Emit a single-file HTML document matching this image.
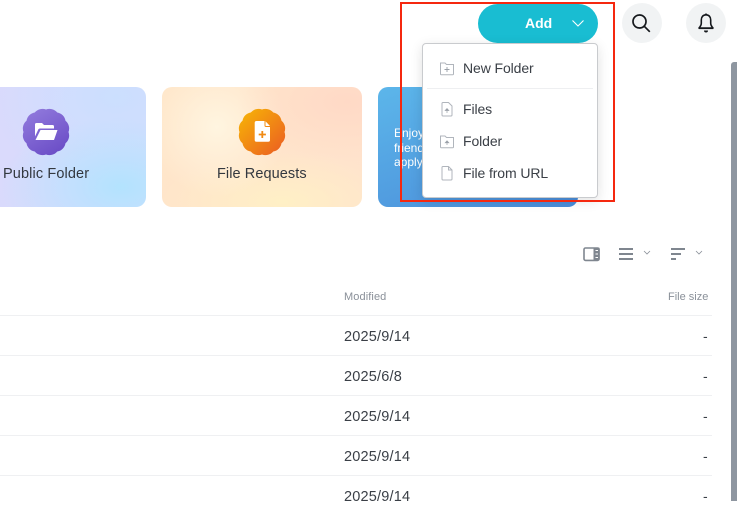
<!DOCTYPE html>
<html><head><meta charset="utf-8">
<style>
html,body{margin:0;padding:0;background:#fff}
body{width:737px;height:501px;position:relative;overflow:hidden;font-family:"Liberation Sans",sans-serif;color:#33383f}
.a{position:absolute}
.t{position:absolute;white-space:nowrap;line-height:20px}
.card{position:absolute;top:87px;height:120px;border-radius:10px;overflow:hidden}
.line{position:absolute;left:0;width:712px;height:1px;background:#eff0f2}
.date{position:absolute;left:344px;font-size:14.500px;line-height:20px;color:#3a3f46;letter-spacing:.2px}
.dash{position:absolute;left:703px;font-size:14px;line-height:20px;color:#3a3f46}
.mi{position:absolute;left:463px;font-size:14px;line-height:20px;color:#3a3f46;white-space:nowrap;letter-spacing:-.1px}
</style></head><body>

<div class="card" style="left:-54px;width:200px;background:radial-gradient(120px 70px at 175px 100px,#b3e3fe 0%,rgba(179,227,254,0) 100%),radial-gradient(130px 90px at 170px 10px,#cbdffe 0%,rgba(203,223,254,0) 100%),linear-gradient(120deg,#dcd9fc,#d6dcfd)"></div>
<svg class="a" style="left:22px;top:108px" width="48" height="48" viewBox="0 0 48 48">
<defs><linearGradient id="g1" x1="0.2" y1="0" x2="0.8" y2="1"><stop offset="0" stop-color="#9079dc"/><stop offset="1" stop-color="#6a4cc6"/></linearGradient>
<linearGradient id="g2" x1="0.1" y1="0.1" x2="0.9" y2="0.9"><stop offset="0" stop-color="#f6ae08"/><stop offset="1" stop-color="#ec6420"/></linearGradient></defs>
<path fill="url(#g1)" d="M46.500 24A10 10 0 0 1 43.490 35.250A10 10 0 0 1 35.250 43.490A10 10 0 0 1 24 46.500A10 10 0 0 1 12.750 43.490A10 10 0 0 1 4.510 35.250A10 10 0 0 1 1.500 24A10 10 0 0 1 4.510 12.750A10 10 0 0 1 12.750 4.510A10 10 0 0 1 24 1.500A10 10 0 0 1 35.250 4.510A10 10 0 0 1 43.490 12.750A10 10 0 0 1 46.500 24Z"/>
<path fill="#fff" d="M14.500 15h5.500l2 2h8.500a1.500 1.500 0 0 1 1.500 1.500V20.500H18a2 2 0 0 0-1.900 1.400L13 28.500V16.500a1.500 1.500 0 0 1 1.500-1.500zM18.500 22H35.500L32 32H13.500z"/>
</svg>
<div class="t" style="left:3px;top:164px;font-size:14.500px;letter-spacing:.12px">Public Folder</div>

<div class="card" style="left:162px;width:200px;background:radial-gradient(110px 60px at 185px 15px,#ffd9c6 0%,rgba(255,217,198,0) 100%),radial-gradient(70px 70px at 55px 40px,#fff5e0 0%,rgba(255,245,224,0) 100%),radial-gradient(120px 50px at 120px 115px,#fff0c6 0%,rgba(255,240,198,0) 100%),linear-gradient(120deg,#ffe6c9,#ffe3cd)"></div>
<svg class="a" style="left:238px;top:108px" width="48" height="48" viewBox="0 0 48 48">
<path fill="url(#g2)" d="M46.500 24A10 10 0 0 1 43.490 35.250A10 10 0 0 1 35.250 43.490A10 10 0 0 1 24 46.500A10 10 0 0 1 12.750 43.490A10 10 0 0 1 4.510 35.250A10 10 0 0 1 1.500 24A10 10 0 0 1 4.510 12.750A10 10 0 0 1 12.750 4.510A10 10 0 0 1 24 1.500A10 10 0 0 1 35.250 4.510A10 10 0 0 1 43.490 12.750A10 10 0 0 1 46.500 24Z"/>
<path fill="#fff" d="M18.500 13H26.500V17.500a1.500 1.500 0 0 0 1.500 1.500h4V32a1.800 1.800 0 0 1-1.800 1.800H18.500a1.800 1.800 0 0 1-1.800-1.800V14.800a1.800 1.800 0 0 1 1.800-1.800zM27.500 13.200L32 18H28a.5.500 0 0 1-.5-.5z"/>
<path fill="#f08a14" d="M23.400 23h1.800v2.600h2.700v1.800h-2.700V30h-1.800v-2.600h-2.700v-1.800h2.700z"/>
</svg>
<div class="t" style="left:217px;top:164px;font-size:14.500px;letter-spacing:.08px">File Requests</div>

<div class="card" style="left:378px;width:200px;background:linear-gradient(160deg,#5cb6ea,#4a8cd9)"></div>
<div class="t" style="left:394px;top:126px;font-size:12px;color:#fff;line-height:14.500px;white-space:normal;width:28px;overflow:hidden">Enjoy<br>friend<br>apply</div>

<div class="a" style="left:478px;top:4px;width:120px;height:39px;border-radius:20px;background:#19bdd2"></div>
<div class="t" style="left:525px;top:13px;font-size:14px;font-weight:bold;color:#fff">Add</div>
<svg class="a" style="left:571px;top:18px" width="14" height="10" viewBox="0 0 14 10"><path d="M1.500 2.500l5.500 5.500L12.500 2.500" fill="none" stroke="#fff" stroke-width="1.100"/></svg>

<div class="a" style="left:622px;top:3px;width:40px;height:40px;border-radius:50%;background:#f1f3f4"></div>
<svg class="a" style="left:630px;top:12px" width="24" height="24" viewBox="0 0 24 24"><circle cx="9.500" cy="9.500" r="6.500" fill="none" stroke="#15181c" stroke-width="1.700"/><path d="M14.300 14.300l5.500 5.500" stroke="#15181c" stroke-width="1.700"/></svg>
<div class="a" style="left:686px;top:3px;width:40px;height:40px;border-radius:50%;background:#f1f3f4"></div>
<svg class="a" style="left:694px;top:11px" width="24" height="24" viewBox="0 0 24 24"><path d="M12 3.800c-3.200 0-4.700 2.500-4.700 5.200v3.200c0 2-1 3.300-2.300 4.800h14c-1.300-1.500-2.300-2.800-2.300-4.800V9c0-2.700-1.500-5.200-4.700-5.200z" fill="none" stroke="#15181c" stroke-width="1.600" stroke-linejoin="round"/><path d="M4.800 17.300h14.400" stroke="#15181c" stroke-width="1.600"/><path d="M10 19.500h4a2 2 0 0 1-4 0z" fill="#15181c"/><path d="M11 3.500h2" stroke="#15181c" stroke-width="1.800"/></svg>

<div class="a" style="left:731px;top:62px;width:6px;height:439px;background:#8e96a0;border-radius:3px 0 0 0"></div>

<div class="a" style="left:422px;top:43px;width:174px;height:153px;background:#fff;border:1px solid #c9cbce;border-radius:4px;box-sizing:content-box;box-shadow:0 3px 12px rgba(0,0,0,.12)"></div>
<div class="a" style="left:427px;top:88px;width:166px;height:1px;background:#eeeff1"></div>
<svg class="a" style="left:439px;top:60px" width="16" height="16" viewBox="0 0 16 16"><path d="M1.500 3h4.500l1.500 1.500h7v9.500a.7.700 0 0 1-.7.700H2.200a.7.700 0 0 1-.7-.7z" fill="none" stroke="#b0b5bc"/><path d="M8 7v5M5.500 9.500h5" stroke="#9aa0a8" stroke-width=".9"/></svg>
<div class="mi" style="top:58px">New Folder</div>
<svg class="a" style="left:439px;top:101px" width="16" height="16" viewBox="0 0 16 16"><path d="M4 1.500h5.500l3.500 3.500v9a1 1 0 0 1-1 1H4a1 1 0 0 1-1-1V2.500a1 1 0 0 1 1-1z" fill="none" stroke="#b0b5bc"/><path d="M8 12V8.500M6.200 9.500L8 7.500l1.800 2z" stroke="#9aa0a8" fill="#9aa0a8" stroke-width=".7"/></svg>
<div class="mi" style="top:99px">Files</div>
<svg class="a" style="left:439px;top:133px" width="16" height="16" viewBox="0 0 16 16"><path d="M1.500 3h4.500l1.500 1.500h7v9.500a.7.700 0 0 1-.7.700H2.200a.7.700 0 0 1-.7-.7z" fill="none" stroke="#b0b5bc"/><path d="M8 12V9M6.200 9.800L8 7.800l1.800 2z" stroke="#9aa0a8" fill="#9aa0a8" stroke-width=".7"/></svg>
<div class="mi" style="top:131px">Folder</div>
<svg class="a" style="left:439px;top:165px" width="16" height="16" viewBox="0 0 16 16"><path d="M4 1.500h5.500l3.500 3.500v9a1 1 0 0 1-1 1H4a1 1 0 0 1-1-1V2.500a1 1 0 0 1 1-1z" fill="none" stroke="#b0b5bc"/><path d="M9.500 1.500V5H13" fill="none" stroke="#b0b5bc"/></svg>
<div class="mi" style="top:163px">File from URL</div>

<div class="a" style="left:400px;top:2px;width:211px;height:196px;border:2px solid #f5280f;box-sizing:content-box"></div>

<svg class="a" style="left:582px;top:246px" width="19" height="16" viewBox="0 0 19 16"><rect x="2" y="2" width="15" height="12.400" rx="1.500" fill="none" stroke="#7f868f" stroke-width="1.600"/><path d="M11.500 1.500h5a1.200 1.200 0 0 1 1.200 1.200v10.600a1.200 1.200 0 0 1-1.200 1.200h-5z" fill="#7f868f"/><path d="M13.500 4.500h2.500M13.500 8h2.500M13.500 11.500h2.500" stroke="#fff"/></svg>
<svg class="a" style="left:619px;top:247px" width="15" height="14" viewBox="0 0 15 14"><path d="M0 2h14M0 7h14M0 12h14" stroke="#7f868f" stroke-width="2"/></svg>
<svg class="a" style="left:643px;top:250px" width="8" height="6" viewBox="0 0 8 6"><path d="M1 1l3 3 3-3" fill="none" stroke="#8a9099" stroke-width=".8"/></svg>
<svg class="a" style="left:671px;top:247px" width="15" height="14" viewBox="0 0 15 14"><path d="M0 2h14M0 7h10M0 12h5" stroke="#7f868f" stroke-width="2"/></svg>
<svg class="a" style="left:695px;top:250px" width="8" height="6" viewBox="0 0 8 6"><path d="M1 1l3 3 3-3" fill="none" stroke="#8a9099" stroke-width=".8"/></svg>

<div class="t" style="left:344px;top:287px;font-size:11px;color:#8a9099;letter-spacing:.1px">Modified</div>
<div class="t" style="left:668px;top:287px;font-size:11px;color:#8a9099">File size</div>
<div class="line" style="top:315px"></div>
<div class="line" style="top:355px"></div>
<div class="line" style="top:395px"></div>
<div class="line" style="top:435px"></div>
<div class="line" style="top:475px"></div>
<div class="date" style="top:327px">2025/9/14</div><div class="dash" style="top:326px">-</div>
<div class="date" style="top:367px">2025/6/8</div><div class="dash" style="top:366px">-</div>
<div class="date" style="top:407px">2025/9/14</div><div class="dash" style="top:406px">-</div>
<div class="date" style="top:447px">2025/9/14</div><div class="dash" style="top:446px">-</div>
<div class="date" style="top:487px">2025/9/14</div><div class="dash" style="top:486px">-</div>
</body></html>
